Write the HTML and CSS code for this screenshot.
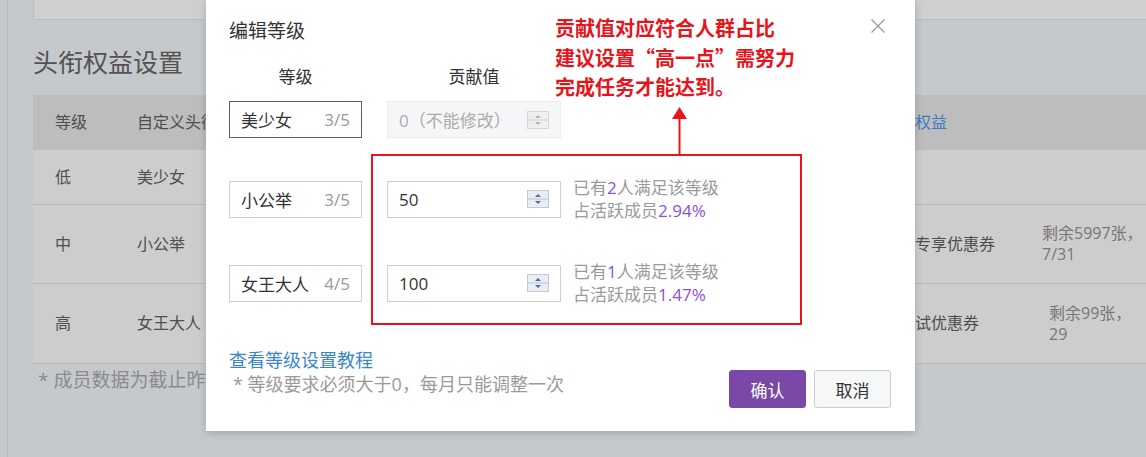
FILE: index.html
```html
<!DOCTYPE html>
<html lang="zh-CN">
<head>
<meta charset="utf-8">
<title>编辑等级</title>
<link rel="stylesheet" href="styles.css">
</head>
<body>
<div class="page">
  <div class="top-card"></div>
  <h2 class="section-title">头衔权益设置</h2>
  <div class="tbl">
    <div class="tbl-row tbl-head">
      <div class="cell c-level">等级</div>
      <div class="cell">自定义头衔</div>
      <div class="cell link-cell">对应权益</div>
      <div class="cell"></div>
    </div>
    <div class="tbl-row r1">
      <div class="cell c-level">低</div>
      <div class="cell">美少女</div>
      <div class="cell"></div>
      <div class="cell"></div>
    </div>
    <div class="tbl-row r2">
      <div class="cell c-level">中</div>
      <div class="cell">小公举</div>
      <div class="cell">会员专享优惠券</div>
      <div class="cell stock">剩余5997张，<br>7/31</div>
    </div>
    <div class="tbl-row r3">
      <div class="cell c-level">高</div>
      <div class="cell">女王大人</div>
      <div class="cell">新测试优惠券</div>
      <div class="cell stock indent">剩余99张，<br>29</div>
    </div>
  </div>
  <p class="page-note">* 成员数据为截止昨天的数据</p>
</div>

<div class="modal">
  <div class="modal-head">
    <h3 class="modal-title">编辑等级</h3>
    <span class="close" aria-label="关闭">
      <svg width="14" height="14" viewBox="0 0 14 14"><path d="M0.5 0.5 L13.5 13.5 M13.5 0.5 L0.5 13.5" stroke="#9a9a9a" stroke-width="1.3" fill="none"/></svg>
    </span>
  </div>

  <div class="col-labels">
    <span class="lbl-name">等级</span>
    <span class="lbl-val">贡献值</span>
  </div>

  <div class="level-rows">
    <div class="level-row first">
      <div class="name-input focused"><span>美少女</span><span class="count">3/5</span></div>
      <div class="num-input disabled"><span>0（不能修改）</span>
        <svg class="spin" width="22" height="18" viewBox="0 0 22 18"><rect x="0.5" y="0.5" width="21" height="17" fill="#eeeff1" stroke="#d6d8db"/><line x1="1" y1="9" x2="21" y2="9" stroke="#d0d3d6"/><path d="M8 7 L11 4 L14 7 Z" fill="#b4b7bb"/><path d="M8 11 L11 14 L14 11 Z" fill="#b4b7bb"/></svg>
      </div>
    </div>
    <div class="level-row">
      <div class="name-input"><span>小公举</span><span class="count">3/5</span></div>
      <div class="num-input"><span>50</span>
        <svg class="spin" width="22" height="18" viewBox="0 0 22 18"><rect x="0.5" y="0.5" width="21" height="17" fill="#e9eef5" stroke="#c3cad4"/><line x1="1" y1="9" x2="21" y2="9" stroke="#b9c2ce"/><path d="M8 7 L11 4 L14 7 Z" fill="#4d69a6"/><path d="M8 11 L11 14 L14 11 Z" fill="#4d69a6"/></svg>
      </div>
      <div class="info">已有<em>2</em>人满足该等级<br>占活跃成员<em>2.94%</em></div>
    </div>
    <div class="level-row">
      <div class="name-input"><span>女王大人</span><span class="count">4/5</span></div>
      <div class="num-input"><span>100</span>
        <svg class="spin" width="22" height="18" viewBox="0 0 22 18"><rect x="0.5" y="0.5" width="21" height="17" fill="#e9eef5" stroke="#c3cad4"/><line x1="1" y1="9" x2="21" y2="9" stroke="#b9c2ce"/><path d="M8 7 L11 4 L14 7 Z" fill="#4d69a6"/><path d="M8 11 L11 14 L14 11 Z" fill="#4d69a6"/></svg>
      </div>
      <div class="info">已有<em>1</em>人满足该等级<br>占活跃成员<em>1.47%</em></div>
    </div>
  </div>

  <div class="modal-foot">
    <div class="foot-left">
      <a class="tutorial" href="#">查看等级设置教程</a>
      <p class="hint">* 等级要求必须大于0，每月只能调整一次</p>
    </div>
    <div class="buttons">
      <button class="btn btn-primary">确认</button>
      <button class="btn btn-default">取消</button>
    </div>
  </div>

  <div class="anno-text">贡献值对应符合人群占比<br>建议设置“高一点”需努力<br>完成任务才能达到。</div>
  <svg class="anno-arrow" width="15" height="48" viewBox="0 0 15 48"><path d="M7.5 0 L15 12 L0 12 Z" fill="#e8141b"/><line x1="7.5" y1="11" x2="7.5" y2="48" stroke="#e8141b" stroke-width="2"/></svg>
  <div class="anno-box"></div>
</div>
</body>
</html>
```

FILE: styles.css
```css
* { box-sizing: border-box; }

body {
  margin: 0;
  width: 1146px;
  height: 457px;
  overflow: hidden;
  position: relative;
  background: #c6c9cc;
  font-family: "Open Sans", "Noto Sans CJK SC", sans-serif;
}

.page {
  margin-left: 7px;
  border-left: 1px solid #b3b6b9;
  height: 457px;
  padding-left: 25px;
}

.top-card {
  height: 20px;
  background: #cfcfcf;
  border-left: 1px solid #bcbcbc;
  border-bottom: 1px solid #bcbcbc;
}

.section-title {
  margin: 26px 0 17px;
  font-size: 25px;
  line-height: 32px;
  font-weight: 400;
  color: #525252;
}

.tbl {
  font-size: 16px;
  color: #4e4e4e;
}

.tbl-row {
  display: grid;
  grid-template-columns: 104px 746px 159px 1fr;
  align-items: center;
  background: #cdcdcd;
  border-bottom: 1px solid #b9b9b9;
}

.tbl-head {
  height: 55px;
  background: #bdbdbd;
  border-bottom: none;
}

.r1 { height: 55px; }
.r2 { height: 79px; }
.r3 { height: 80px; }

.cell {
  white-space: nowrap;
  line-height: 21px;
}

.c-level { padding-left: 22px; }

.link-cell { color: #3a7cc2; }

.stock { color: #777; }
.stock.indent { padding-left: 7px; }

.page-note {
  margin: 3px 0 0;
  padding-left: 5px;
  font-size: 19px;
  line-height: 26px;
  color: #8b8b8b;
}

/* modal */
.modal {
  position: absolute;
  left: 206px;
  top: 0;
  width: 709px;
  height: 431px;
  padding: 18px 24px 23px 23px;
  background: #fff;
  box-shadow: 0 2px 8px rgba(0, 0, 0, 0.18);
  color: #333;
}

.modal-head {
  display: flex;
  justify-content: space-between;
  align-items: flex-start;
  height: 26px;
}

.modal-title {
  margin: 0;
  font-size: 19px;
  line-height: 26px;
  font-weight: 400;
  color: #333;
}

.close {
  display: block;
  margin: 1px 6px 0 0;
  width: 14px;
  height: 14px;
}
.close svg { display: block; }

.col-labels {
  display: flex;
  margin-top: 22px;
  height: 22px;
  font-size: 17px;
  line-height: 22px;
  color: #333;
}

.lbl-name { width: 133px; text-align: center; }
.lbl-val { width: 174px; margin-left: 25px; text-align: center; }

.level-rows {
  margin-top: 13px;
  display: flex;
  flex-direction: column;
  gap: 38px;
}

.level-row {
  display: flex;
  align-items: center;
  height: 46px;
}
.level-row.first { height: 37px; }

.name-input {
  width: 133px;
  height: 37px;
  border: 1px solid #cfcfcf;
  display: flex;
  align-items: center;
  justify-content: space-between;
  padding: 0 11px 0 11px;
  font-size: 17px;
  color: #333;
}
.name-input.focused { border-color: #6f4f8d; }

.count { color: #9a9a9a; font-size: 17px; }

.num-input {
  width: 174px;
  height: 37px;
  margin-left: 25px;
  border: 1px solid #cfcfcf;
  display: flex;
  align-items: center;
  justify-content: space-between;
  padding: 0 11px 0 11px;
  font-size: 17px;
  color: #333;
}
.num-input.disabled {
  background: #f5f6f7;
  border-color: #ececec;
  color: #ababab;
}
.spin { display: block; }

.info {
  margin-left: 12px;
  font-size: 17px;
  line-height: 23px;
  color: #9a9a9a;
  white-space: nowrap;
}
.info em { font-style: normal; color: #8c50d8; }

.modal-foot {
  margin-top: 42px;
  display: flex;
  justify-content: space-between;
  align-items: flex-start;
}

.tutorial {
  display: block;
  font-size: 18px;
  line-height: 24px;
  color: #3b86c8;
  text-decoration: none;
}

.hint {
  margin: 0;
  padding-left: 4px;
  font-size: 18px;
  line-height: 24px;
  color: #9a9a9a;
}

.buttons {
  display: flex;
  gap: 8px;
  margin-top: 22px;
}

.btn {
  width: 77px;
  height: 38px;
  border-radius: 3px;
  font-family: inherit;
  font-size: 17px;
  padding: 0;
  cursor: pointer;
}
.btn-primary {
  background: #7a48a6;
  border: 1px solid #7a48a6;
  color: #fff;
}
.btn-default {
  background: #f6f7f8;
  border: 1px solid #cdcdcd;
  color: #333;
}

/* red annotations laid over the dialog */
.anno-text {
  position: absolute;
  left: 349px;
  top: 13px;
  font-family: "Noto Sans CJK SC", sans-serif;
  font-size: 20px;
  font-weight: 700;
  line-height: 29.5px;
  color: #e8141b;
  white-space: nowrap;
}

.anno-arrow {
  position: absolute;
  left: 466px;
  top: 107px;
}

.anno-box {
  position: absolute;
  left: 165px;
  top: 154px;
  width: 431px;
  height: 171px;
  border: 2px solid #e8141b;
}
```
